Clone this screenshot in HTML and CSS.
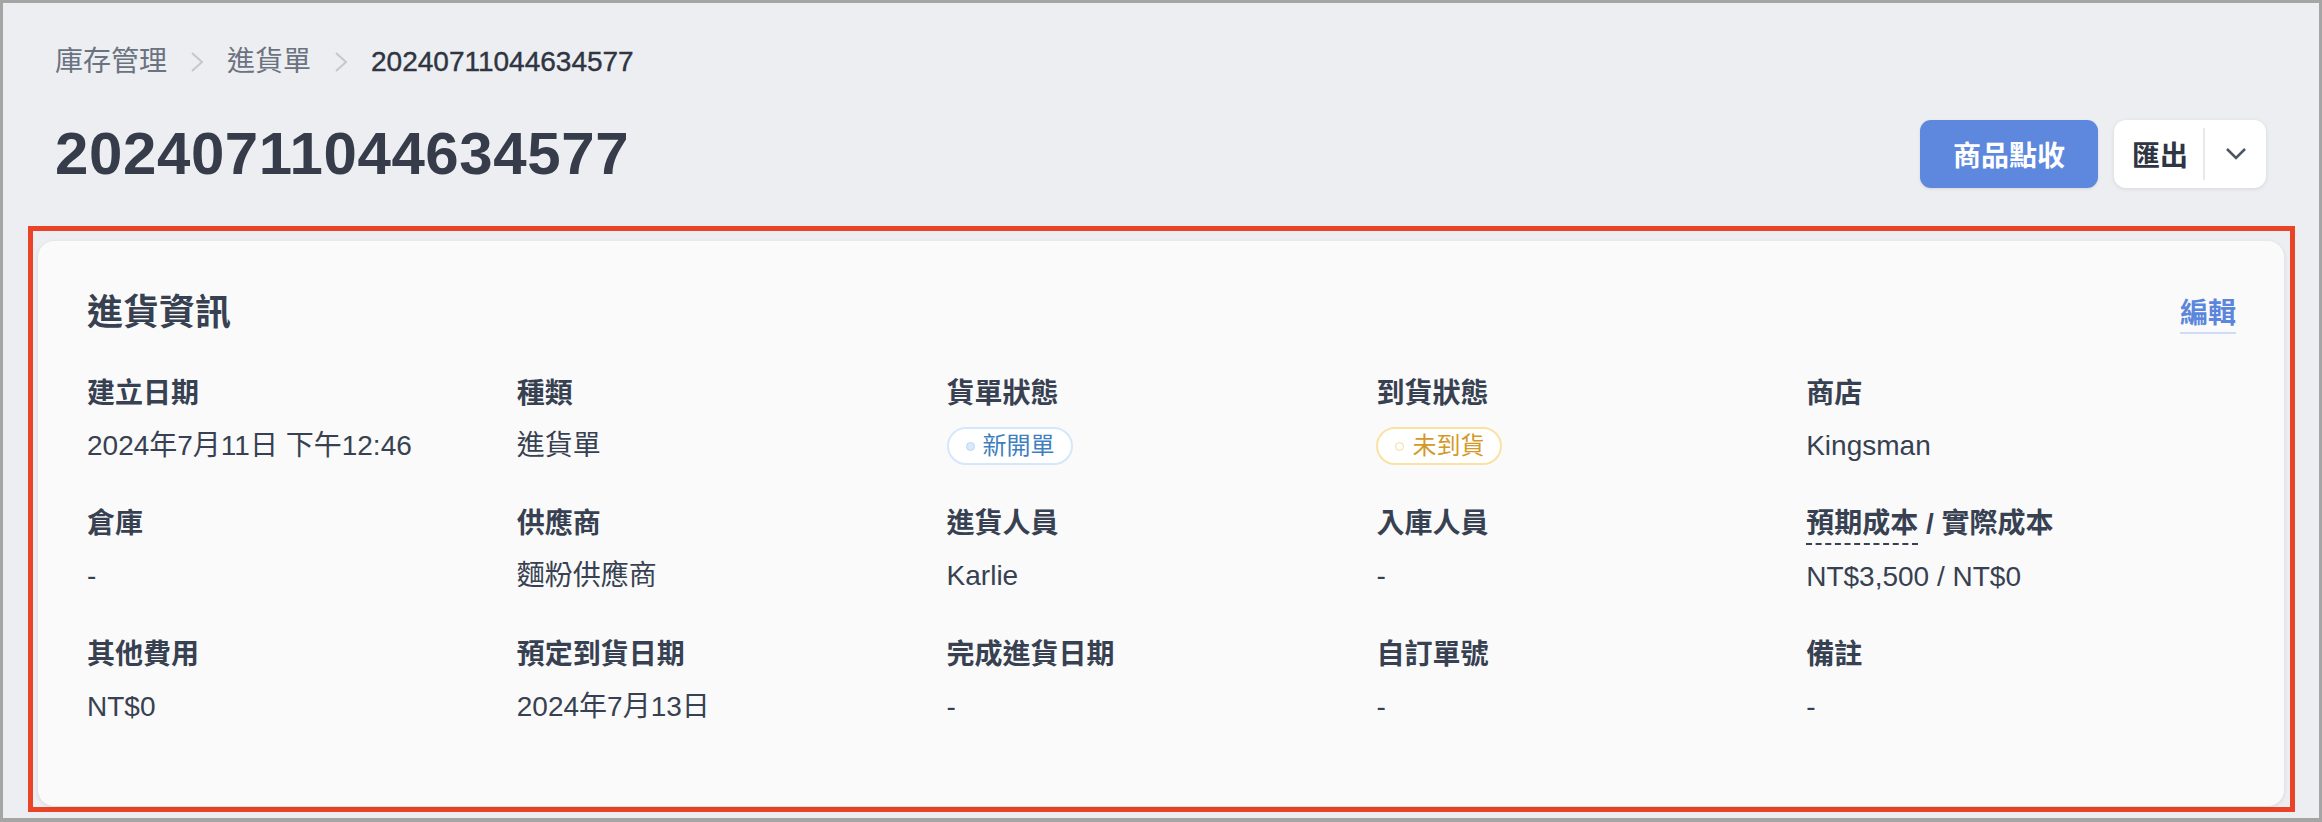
FILE: index.html
```html
<!DOCTYPE html>
<html lang="zh-Hant">
<head>
    <meta charset="UTF-8">
    <title>20240711044634577 - 進貨單</title>
    <link rel="stylesheet" href="styles.css">
</head>
<body>
    <div class="frame">
        <div class="page-header">
            <nav class="breadcrumb">
                <a href="#">庫存管理</a>
                <svg class="crumb-sep" width="20" height="20" viewBox="0 0 20 20"><polyline points="5,1 15,10 5,19" /></svg>
                <a href="#">進貨單</a>
                <svg class="crumb-sep" width="20" height="20" viewBox="0 0 20 20"><polyline points="5,1 15,10 5,19" /></svg>
                <span class="current">20240711044634577</span>
            </nav>
            <div class="title-row">
                <h1>20240711044634577</h1>
                <div class="actions">
                    <button class="btn-primary">商品點收</button>
                    <div class="btn-group">
                        <button class="btn-export">匯出</button>
                        <span class="divider"></span>
                        <button class="btn-caret">
                            <svg width="22" height="14" viewBox="0 0 22 14"><polyline points="2,2 11,11 20,2" /></svg>
                        </button>
                    </div>
                </div>
            </div>
        </div>

        <div class="highlight">
            <div class="card">
                <div class="card-header">
                    <h2>進貨資訊</h2>
                    <a href="#" class="edit-link">編輯</a>
                </div>
                <div class="info-grid">
                    <div class="field">
                        <div class="label">建立日期</div>
                        <div class="value">2024年7月11日 下午12:46</div>
                    </div>
                    <div class="field">
                        <div class="label">種類</div>
                        <div class="value">進貨單</div>
                    </div>
                    <div class="field">
                        <div class="label">貨單狀態</div>
                        <div class="value"><span class="badge badge-blue"><span class="dot"></span>新開單</span></div>
                    </div>
                    <div class="field">
                        <div class="label">到貨狀態</div>
                        <div class="value"><span class="badge badge-yellow"><span class="dot"></span>未到貨</span></div>
                    </div>
                    <div class="field">
                        <div class="label">商店</div>
                        <div class="value">Kingsman</div>
                    </div>

                    <div class="field">
                        <div class="label">倉庫</div>
                        <div class="value">-</div>
                    </div>
                    <div class="field">
                        <div class="label">供應商</div>
                        <div class="value">麵粉供應商</div>
                    </div>
                    <div class="field">
                        <div class="label">進貨人員</div>
                        <div class="value">Karlie</div>
                    </div>
                    <div class="field">
                        <div class="label">入庫人員</div>
                        <div class="value">-</div>
                    </div>
                    <div class="field">
                        <div class="label"><span class="hint">預期成本</span> / 實際成本</div>
                        <div class="value">NT$3,500 / NT$0</div>
                    </div>

                    <div class="field">
                        <div class="label">其他費用</div>
                        <div class="value">NT$0</div>
                    </div>
                    <div class="field">
                        <div class="label">預定到貨日期</div>
                        <div class="value">2024年7月13日</div>
                    </div>
                    <div class="field">
                        <div class="label">完成進貨日期</div>
                        <div class="value">-</div>
                    </div>
                    <div class="field">
                        <div class="label">自訂單號</div>
                        <div class="value">-</div>
                    </div>
                    <div class="field">
                        <div class="label">備註</div>
                        <div class="value">-</div>
                    </div>
                </div>
            </div>
        </div>
    </div>
</body>
</html>
```

FILE: styles.css
```css
* {
    box-sizing: border-box;
}
body {
    margin: 0;
    font-family: "Liberation Sans", "Noto Sans CJK TC", sans-serif;
    color: #374151;
}
.frame {
    height: 822px;
    border: 3px solid #a5a5a5;
    border-bottom-width: 4px;
    background-color: #edeef1;
}
.page-header {
    padding: 39px 53px 0 52px;
}
.breadcrumb {
    display: flex;
    align-items: center;
    height: 40px;
    font-size: 28px;
    line-height: 40px;
}
.breadcrumb a {
    color: #6b7280;
    text-decoration: none;
}
.crumb-sep {
    margin: 0 20px;
}
.crumb-sep polyline {
    fill: none;
    stroke: #c3c7cf;
    stroke-width: 2;
}
.breadcrumb .current {
    font-weight: 500;
    color: #2f3542;
    -webkit-text-stroke: 0.4px #2f3542;
}
.title-row {
    display: flex;
    justify-content: space-between;
    align-items: center;
    margin-top: 36px;
    height: 72px;
}
.title-row h1 {
    margin: 0;
    font-size: 60px;
    line-height: 72px;
    font-weight: 700;
    letter-spacing: 0.6px;
    color: #363c4a;
}
.actions {
    display: flex;
    align-items: center;
    gap: 16px;
}
.btn-primary {
    height: 68px;
    padding: 0 33px;
    border: none;
    border-radius: 11px;
    background-color: #5d88de;
    color: #fff;
    font-family: inherit;
    font-size: 28px;
    font-weight: 700;
    box-shadow: 0 1px 3px rgba(0, 0, 0, 0.1);
}
.btn-group {
    display: flex;
    align-items: center;
    height: 68px;
    background-color: #fff;
    border-radius: 12px;
    box-shadow: 0 1px 4px rgba(0, 0, 0, 0.1);
}
.btn-export {
    height: 68px;
    padding: 0 15px 0 18px;
    border: none;
    background: none;
    font-family: inherit;
    font-size: 28px;
    font-weight: 700;
    color: #2f3542;
}
.divider {
    width: 2px;
    height: 52px;
    background-color: #e6e8ec;
}
.btn-caret {
    display: flex;
    align-items: center;
    justify-content: center;
    width: 61px;
    height: 68px;
    border: none;
    background: none;
    padding: 0;
}
.btn-caret polyline {
    fill: none;
    stroke: #4b5563;
    stroke-width: 2.5;
}
.highlight {
    margin: 36px 24px 0 25px;
    padding: 10px 6px 1px 5px;
    border: 5px solid #ea4428;
}
.card {
    background-color: #fafafa;
    border-radius: 16px;
    box-shadow: 0 1px 4px rgba(0, 0, 0, 0.1);
    padding: 48px 48px 79px 49px;
}
.card-header {
    display: flex;
    justify-content: space-between;
    align-items: center;
    height: 48px;
    margin-bottom: 37px;
}
.card-header h2 {
    margin: 0;
    font-size: 36px;
    line-height: 48px;
    font-weight: 700;
}
.edit-link {
    font-size: 28px;
    line-height: 36px;
    font-weight: 600;
    color: #5b86dc;
    text-decoration: none;
    border-bottom: 2px solid #cfdcf6;
    padding-top: 4px;
}
.info-grid {
    display: grid;
    grid-template-columns: repeat(5, 1fr);
    row-gap: 38px;
}
.label {
    font-size: 28px;
    line-height: 40px;
    font-weight: 600;
}
.hint {
    display: inline-block;
    line-height: 38px;
    border-bottom: 2px dashed #374151;
}
.value {
    margin-top: 12px;
    height: 40px;
    font-size: 28px;
    line-height: 40px;
    display: flex;
    align-items: center;
}
.badge {
    display: inline-flex;
    align-items: center;
    gap: 8px;
    height: 38px;
    padding: 0 16px 0 17px;
    border: 2px solid;
    border-radius: 19px;
    font-size: 24px;
    line-height: 34px;
    background-color: #fff;
}
.badge .dot {
    width: 9px;
    height: 9px;
    border-radius: 50%;
    border: 1.5px solid;
}
.badge-blue {
    border-color: #d5e7fb;
    color: #3f7fc0;
}
.badge-blue .dot {
    background-color: #d7e9fb;
    border-color: #b8d7f5;
}
.badge-yellow {
    border-color: #fbe1a3;
    color: #d3992a;
}
.badge-yellow .dot {
    background-color: #fff;
    border-color: #f8da98;
}
```
